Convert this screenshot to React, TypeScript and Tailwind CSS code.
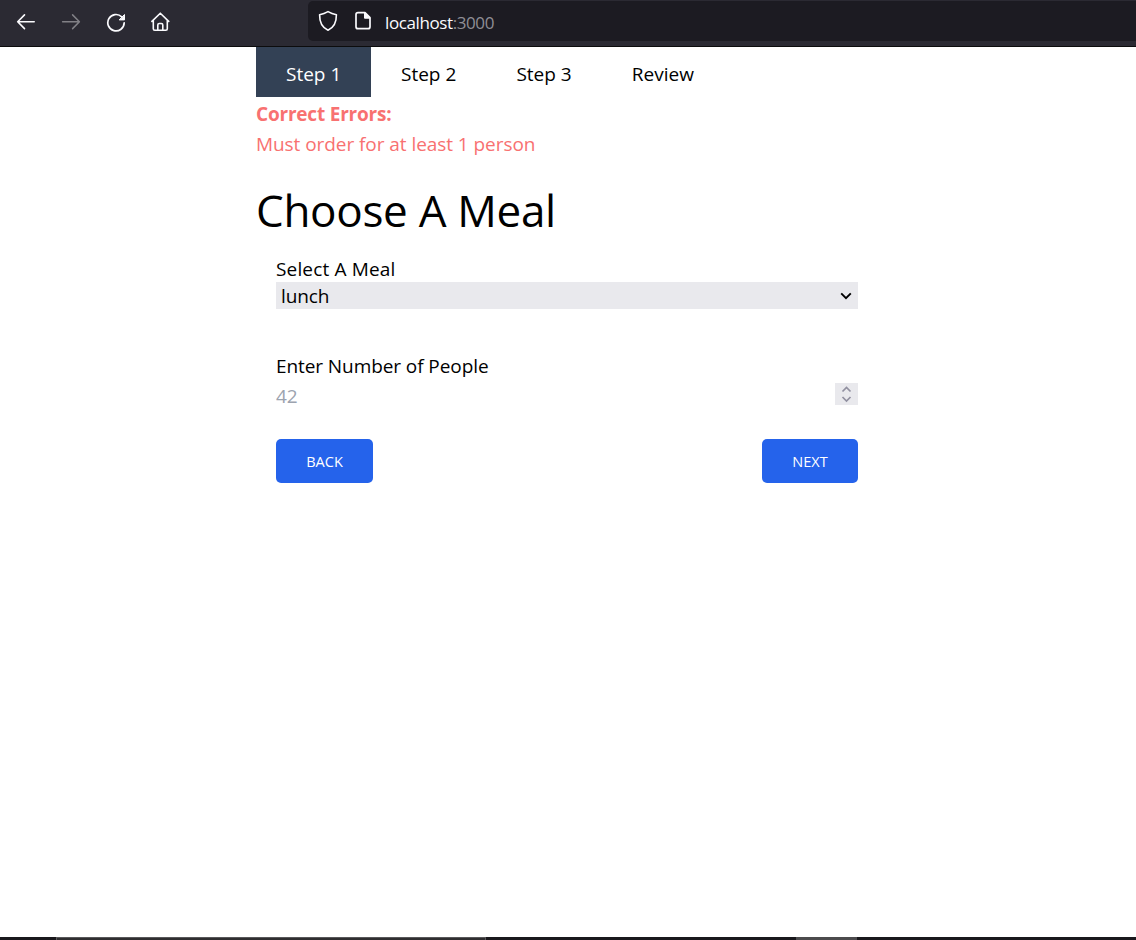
import React from "react";

const steps = [
  { label: "Step 1", active: true },
  { label: "Step 2", active: false },
  { label: "Step 3", active: false },
  { label: "Review", active: false },
];

function Toolbar() {
  return (
    <header className="flex h-[47px] shrink-0 border-b border-[#0c0c0d] bg-[#2b2a33] text-[#fbfbfe]">
      <div className="flex w-[308px] shrink-0 items-start gap-[25px] pt-[12px] pl-[16px]">
        <svg className="h-5 w-5" viewBox="0 0 20 20" fill="none" stroke="currentColor" strokeWidth="1.6" strokeLinecap="round" strokeLinejoin="round">
          <path d="M18.2 9.7H2M8.5 2.9 1.7 9.7l6.8 6.9" />
        </svg>
        <svg className="h-5 w-5 text-[#818086]" viewBox="0 0 20 20" fill="none" stroke="currentColor" strokeWidth="1.5" strokeLinecap="round" strokeLinejoin="round">
          <path d="M1.600 9.700H18M11.600 2.900l6.800 6.800-6.800 6.900" />
        </svg>
        <svg className="h-5 w-5" viewBox="0 0 20 20" fill="none" stroke="currentColor" strokeWidth="1.7" strokeLinecap="round" strokeLinejoin="round">
          <path d="M18.200 10.800a8.200 8.200 0 1 1-2.500-6" />
          <path d="M18.500 2.900v5h-5z" fill="currentColor" strokeWidth="1" />
        </svg>
        <svg className="h-5 w-5" viewBox="0 0 20 20" fill="none" stroke="currentColor" strokeWidth="1.6" strokeLinecap="round" strokeLinejoin="round">
          <path d="M.9 9.4 9.3 1.2l8.4 8.2M2.3 8.2v8.6q0 1.5 1.5 1.5h11q1.500 0 1.500-1.500V8.200M6.800 18v-5q0-1.500 1.500-1.500h2q1.500 0 1.500 1.500v5" />
        </svg>
      </div>
      <div className="mt-px flex h-10 flex-1 items-start rounded-l-[5px] bg-[#1c1b22] pt-[9px] pl-[10px]">
        <svg className="h-[22px] w-5" viewBox="0 0 20 22" fill="none" stroke="currentColor" strokeWidth="1.6" strokeLinejoin="round">
          <path d="M10 1.600c2.700 1.500 5.400 2.500 8.400 3.200C18.500 12.200 16 17.600 10 20.200 4 17.600 1.500 12.200 1.600 4.800 4.600 4.100 7.300 3.100 10 1.600z" />
        </svg>
        <svg className="ml-[15px] h-[22px] w-5" viewBox="0 0 20 22" fill="none" stroke="currentColor" strokeWidth="1.7" strokeLinejoin="round">
          <path d="M12 2.700H5Q3 2.700 3 4.700v12Q3 18.700 5 18.700h10q2 0 2-2V7.700z" />
          <path d="M11.500 2.700v5.500H17z" fill="currentColor" strokeWidth="1" />
        </svg>
        <div className="mt-px ml-[12px] text-[17px] leading-6 tracking-[-0.4px]">
          localhost<span className="text-[#8f8e95]">:3000</span>
        </div>
      </div>
    </header>
  );
}

export default function App() {
  return (
    <div className="flex h-[940px] w-full flex-col overflow-hidden bg-white font-['Open_Sans','Noto_Sans',sans-serif] text-black">
      <Toolbar />
      <main className="ml-[256px] w-[622px] flex-1">
        <nav className="flex h-[50px]">
          {steps.map((step) => (
            <div
              key={step.label}
              className={
                step.active
                  ? "w-[115px] bg-[#334155] pt-[12px] pl-[30px] text-[19px] leading-[30px] text-white"
                  : "w-[115.4px] pt-[12px] pl-[30px] text-[19px] leading-[30px]"
              }
            >
              {step.label}
            </div>
          ))}
        </nav>
        <section className="pt-[2px] text-[19px] leading-[30px] text-[#f87171]">
          <p className="font-bold tracking-[-0.2px]">Correct Errors:</p>
          <p className="tracking-[-0.06px]">Must order for at least 1 person</p>
        </section>
        <h1 className="mt-[26px] text-[44px] leading-[50px] tracking-[-0.3px]">Choose A Meal</h1>
        <form className="px-5 pt-[19px]">
          <label htmlFor="meal" className="block h-[28px] text-[19px] leading-[30px] tracking-[0.15px]">Select A Meal</label>
          <div className="flex h-[27px] items-center bg-[#e9e9ed] pr-[6px]">
            <select id="meal" defaultValue="lunch" className="h-[27px] flex-1 appearance-none pt-[2px] pl-[5px] text-[19px] leading-[25px] tracking-[-0.1px]">
              <option value="lunch">lunch</option>
            </select>
            <svg className="h-3 w-3" viewBox="0 0 12 12" fill="none" stroke="black" strokeWidth="1.9">
              <path d="m1.200 3.300 4.800 4.900 4.800-4.900" />
            </svg>
          </div>
          <label htmlFor="people" className="mt-[42px] block text-[19px] leading-[30px] tracking-[-0.08px]">Enter Number of People</label>
          <div className="flex h-[30px] items-center">
            <input id="people" type="text" placeholder="42" className="h-[30px] flex-1 text-[19px] leading-[30px] placeholder:text-[#9ca3af]" />
            <div className="mb-[4px] flex h-[22px] w-[23px] items-center justify-center bg-[#e9e9ed]">
              <svg className="h-5 w-3" viewBox="0 0 12 20" fill="none" stroke="#9190a0" strokeWidth="1.7">
                <path d="m1.500 7.500 4-4 4 4M1.500 13l4 4 4-4" />
              </svg>
            </div>
          </div>
          <div className="mt-[28px] flex justify-between text-[14.500px] text-white">
            <button type="button" className="h-11 w-[97px] rounded-[5px] bg-[#2563eb] pt-px">BACK</button>
            <button type="button" className="h-11 w-[96px] rounded-[5px] bg-[#2563eb] pt-px">NEXT</button>
          </div>
        </form>
      </main>
      <footer className="flex h-[3px] shrink-0 bg-[#19181c]">
        <div className="ml-[56px] h-[3px] w-[430px] border-x border-t border-[#59585a] bg-[#2f2e30]" />
        <div className="ml-[310px] h-[3px] w-[61px] bg-[#4c4b4d]" />
      </footer>
    </div>
  );
}
